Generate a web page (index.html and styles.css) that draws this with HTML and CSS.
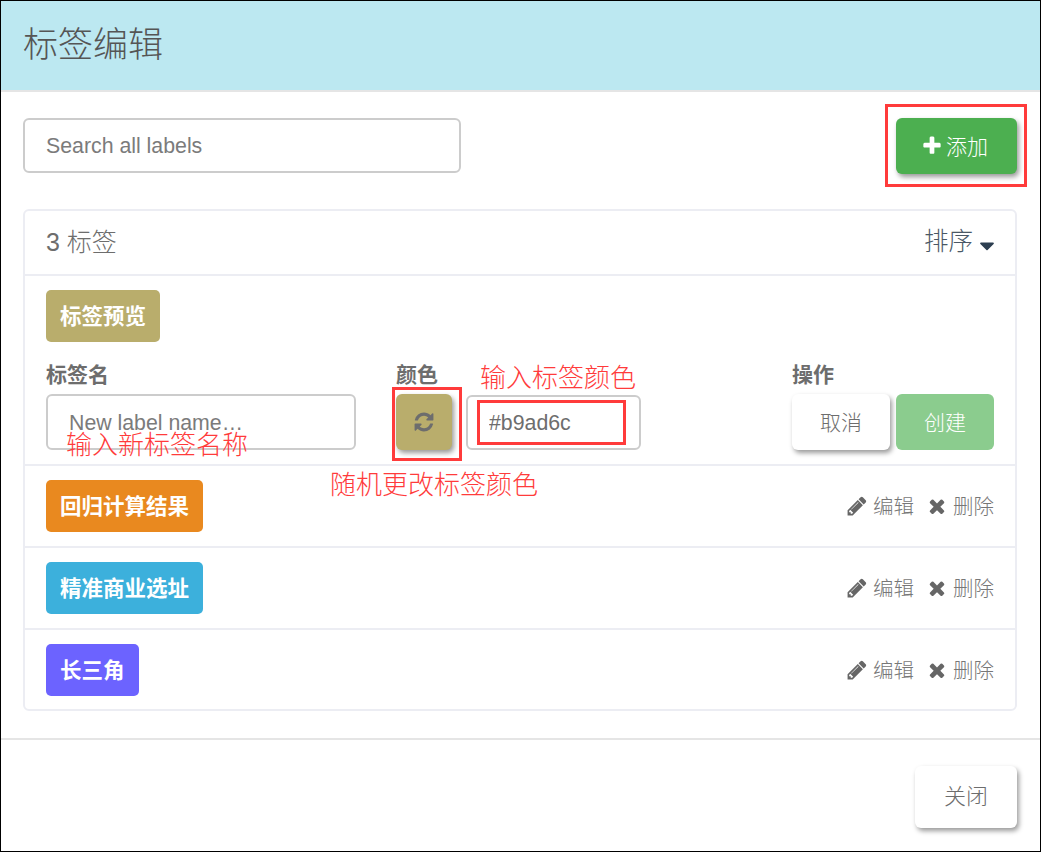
FILE: index.html
```html
<!DOCTYPE html>
<html lang="zh-CN">
<head>
  <meta charset="UTF-8" />
  <title>标签编辑</title>
  <link rel="stylesheet" href="styles.css">
</head>
<body>
  <svg class="defs" width="0" height="0">
    <symbol id="i-plus" viewBox="0 0 1792 1792"><path d="M1600 736v192q0 40-28 68t-68 28h-416v416q0 40-28 68t-68 28h-192q-40 0-68-28t-28-68v-416h-416q-40 0-68-28t-28-68v-192q0-40 28-68t68-28h416v-416q0-40 28-68t68-28h192q40 0 68 28t28 68v416h416q40 0 68 28t28 68z"/></symbol>
    <symbol id="i-caret" viewBox="0 0 1792 1792"><path d="M1408 704q0 26-19 45l-448 448q-19 19-45 19t-45-19l-448-448q-19-19-19-45t19-45 45-19h896q26 0 45 19t19 45z"/></symbol>
    <symbol id="i-refresh" viewBox="0 0 1792 1792"><path d="M1639 1056q0 5-1 7-64 268-268 434.5t-478 166.5q-146 0-282.5-55t-243.5-157l-129 129q-19 19-45 19t-45-19-19-45v-448q0-26 19-45t45-19h448q26 0 45 19t19 45-19 45l-137 137q71 66 161 102t187 36q134 0 250-65t186-179q11-17 53-117 8-23 30-23h192q13 0 22.5 9.5t9.5 22.5zm25-800v448q0 26-19 45t-45 19h-448q-26 0-45-19t-19-45 19-45l138-138q-148-137-349-137-134 0-250 65t-186 179q-11 17-53 117-8 23-30 23h-199q-13 0-22.5-9.5t-9.5-22.5v-7q65-268 270-434.5t480-166.5q146 0 284 55.5t245 156.5l130-129q19-19 45-19t45 19 19 45z"/></symbol>
    <symbol id="i-pencil" viewBox="0 0 1792 1792"><path d="M491 1536l91-91-235-235-91 91v107h128v128h107zm523-928q0-22-22-22-10 0-17 7l-542 542q-7 7-7 17 0 22 22 22 10 0 17-7l542-542q7-7 7-17zm-54-192l416 416-832 832h-416v-416zm683 96q0 53-37 90l-166 166-416-416 166-165q36-38 90-38 53 0 91 38l235 234q37 39 37 91z"/></symbol>
    <symbol id="i-times" viewBox="0 0 1792 1792"><path d="M1490 1322q0 40-28 68l-136 136q-28 28-68 28t-68-28l-294-294-294 294q-28 28-68 28t-68-28l-136-136q-28-28-28-68t28-68l294-294-294-294q-28-28-28-68t28-68l136-136q28-28 68-28t68 28l294 294 294-294q28-28 68-28t68 28l136 136q28 28 28 68t-28 68l-294 294 294 294q28 28 28 68z"/></symbol>
  </svg>

  <div class="modal">
    <div class="modal-header">
      <h2>标签编辑</h2>
    </div>

    <div class="modal-body">
      <div class="toolbar">
        <input class="field search" type="text" placeholder="Search all labels">
        <button class="btn btn-green btn-add"><svg class="icon"><use href="#i-plus"/></svg>添加</button>
      </div>

      <div class="panel">
        <div class="panel-head">
          <span class="count">3 标签</span>
          <span class="sort">排序<svg class="icon caret"><use href="#i-caret"/></svg></span>
        </div>

        <div class="row-edit">
          <span class="tag tag-preview">标签预览</span>
          <div class="form">
            <div class="col-name">
              <label>标签名</label>
              <input class="field" type="text" placeholder="New label name…">
            </div>
            <div class="col-color">
              <label>颜色</label>
              <div class="color-inputs">
                <button class="btn btn-random"><svg class="icon"><use href="#i-refresh"/></svg></button>
                <input class="field color" type="text" value="#b9ad6c">
              </div>
            </div>
            <div class="col-actions">
              <label>操作</label>
              <div class="action-btns">
                <button class="btn btn-white btn-cancel">取消</button>
                <button class="btn btn-create">创建</button>
              </div>
            </div>
          </div>
        </div>

        <div class="row">
          <span class="tag tag-orange">回归计算结果</span>
          <div class="ops">
            <a><svg class="icon"><use href="#i-pencil"/></svg>编辑</a>
            <a><svg class="icon"><use href="#i-times"/></svg>删除</a>
          </div>
        </div>
        <div class="row">
          <span class="tag tag-blue">精准商业选址</span>
          <div class="ops">
            <a><svg class="icon"><use href="#i-pencil"/></svg>编辑</a>
            <a><svg class="icon"><use href="#i-times"/></svg>删除</a>
          </div>
        </div>
        <div class="row">
          <span class="tag tag-purple">长三角</span>
          <div class="ops">
            <a><svg class="icon"><use href="#i-pencil"/></svg>编辑</a>
            <a><svg class="icon"><use href="#i-times"/></svg>删除</a>
          </div>
        </div>
      </div>
    </div>

    <div class="modal-footer">
      <button class="btn btn-white btn-close">关闭</button>
    </div>

    <!-- red notes drawn over the screenshot -->
    <div class="box box-add"></div>
    <div class="box box-random"></div>
    <div class="box box-color"></div>
    <span class="note note-name">输入新标签名称</span>
    <span class="note note-color">输入标签颜色</span>
    <span class="note note-random">随机更改标签颜色</span>
  </div>
</body>
</html>
```

FILE: styles.css
```css
* {
  box-sizing: border-box;
}
body {
  margin: 0;
  font-family: "Liberation Sans", "Noto Sans CJK SC", sans-serif;
  color: #6d6d6d;
}
.defs {
  position: absolute;
}
.modal {
  position: relative;
  width: 1041px;
  height: 852px;
  border: 1px solid #000;
  background: #fff;
}
.modal-header {
  height: 91px;
  padding-left: 22px;
  background: #bce8f1;
  border-bottom: 2px solid #e5e5e5;
}
h2 {
  margin: 0;
  font-size: 35px;
  font-weight: 300;
  line-height: 88px;
  color: #555;
}
.modal-body {
  padding: 26px 23px 27px 22px;
  border-bottom: 2px solid #e5e5e5;
}
.toolbar {
  display: flex;
  justify-content: space-between;
  align-items: flex-start;
  margin-bottom: 35px;
}
.field {
  height: 56px;
  padding: 2px 21px 0;
  border: 2px solid #ccc;
  border-radius: 6px;
  font-family: inherit;
  font-size: 21.3px;
  color: #6d6d6d;
  background: #fff;
  outline: none;
}
.field::placeholder {
  color: #7b7b7b;
  opacity: 1;
}
.search {
  width: 438px;
  height: 55px;
}
.btn {
  border: none;
  border-radius: 6px;
  height: 56px;
  font-family: inherit;
  font-size: 21px;
  font-weight: 300;
  padding: 0 0 2px;
  cursor: pointer;
}
.btn-green {
  background: #4caf50;
  color: #fff;
  box-shadow: 2px 3px 5px rgba(0, 0, 0, 0.4);
}
.btn-white {
  background: #fff;
  color: #6d6d6d;
  box-shadow: 2px 3px 5px rgba(0, 0, 0, 0.4);
}
.btn-add {
  width: 121px;
  padding-right: 4px;
}
.icon {
  display: inline-block;
  width: 22px;
  height: 22px;
  fill: currentColor;
  vertical-align: -3px;
}
.btn-add .icon {
  margin-right: 3px;
}
.panel {
  border: 2px solid #ecedf3;
  border-radius: 6px;
}
.panel-head {
  display: flex;
  justify-content: space-between;
  align-items: center;
  height: 65px;
  padding: 0 21px 5px;
  border-bottom: 2px solid #ecedf3;
}
.count {
  font-size: 25px;
  font-weight: 300;
}
.sort {
  font-size: 24.5px;
  font-weight: 300;
  color: #4a5866;
}
.caret {
  width: 24px;
  height: 24px;
  margin: 0 -5px 0 2px;
  vertical-align: -8px;
  color: #2c3e50;
}
.tag {
  display: inline-block;
  height: 52px;
  padding: 0 14px;
  border-radius: 5px;
  font-family: "Noto Sans CJK SC", sans-serif;
  font-size: 21.5px;
  font-weight: 700;
  line-height: 50px;
  color: #fff;
}
.tag-preview {
  background: #b9ad6c;
}
.tag-orange {
  background: #e9891f;
}
.tag-blue {
  background: #3cb0dc;
}
.tag-purple {
  background: #6c63ff;
}
.row-edit {
  height: 190px;
  padding: 14px 21px 0;
  border-bottom: 2px solid #ecedf3;
}
.form {
  display: flex;
  margin-top: 20px;
}
label {
  display: block;
  height: 32px;
  padding-top: 1px;
  font-size: 21px;
  font-weight: 700;
  line-height: 24px;
  color: #6d6d6d;
}
.col-name {
  width: 350px;
}
.col-name .field {
  width: 310px;
}
.col-color {
  width: 396px;
}
.color-inputs {
  display: flex;
  align-items: flex-end;
  gap: 14px;
}
.btn-random {
  width: 56px;
  padding: 0;
  background: #b9ad6c;
  color: #6d6d6d;
  box-shadow: 2px 3px 5px rgba(0, 0, 0, 0.4);
}
.btn-random .icon {
  vertical-align: -4px;
}
.color {
  width: 175px;
  height: 55px;
}
.action-btns {
  display: flex;
  gap: 6px;
}
.btn-cancel,
.btn-create {
  width: 98px;
}
.btn-create {
  background: #8bcc8e;
  color: #fff;
}
.row {
  display: flex;
  justify-content: space-between;
  align-items: center;
  height: 82px;
  padding: 0 21px;
  border-bottom: 2px solid #ecedf3;
}
.row:last-child {
  height: 79px;
  border-bottom: none;
}
.ops {
  display: flex;
  gap: 12px;
  margin-top: -2px;
  font-size: 20.5px;
  font-weight: 300;
  color: #777;
}
.ops .icon {
  margin-right: 5px;
  color: #666;
}
.modal-footer {
  display: flex;
  justify-content: flex-end;
  padding: 26px 23px 0 0;
}
.btn-close {
  width: 102px;
  height: 62px;
  padding: 0 0 6px;
  font-size: 22px;
}
.box {
  position: absolute;
  border: 3px solid #ff3b3b;
}
.box-add {
  left: 884px;
  top: 103px;
  width: 142px;
  height: 83px;
}
.box-random {
  left: 391px;
  top: 386px;
  width: 70px;
  height: 74px;
}
.box-color {
  left: 476px;
  top: 399px;
  width: 149px;
  height: 45px;
}
.note {
  position: absolute;
  font-size: 26px;
  line-height: 30px;
  font-weight: 300;
  white-space: nowrap;
  color: #ff3b3b;
}
.note-name {
  left: 65px;
  top: 429px;
}
.note-color {
  left: 479px;
  top: 362px;
}
.note-random {
  left: 329px;
  top: 469px;
}
```
